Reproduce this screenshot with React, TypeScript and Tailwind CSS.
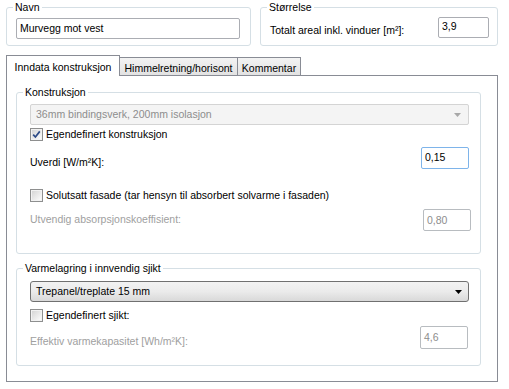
import type { ReactNode } from "react";

function GroupBox({ title, className, innerClassName, children }: { title: string; className: string; innerClassName: string; children: ReactNode }) {
  return (
    <fieldset className={`rounded-[3px] border border-[#d5dfe5] ${className}`}>
      <legend className="ml-[6px] px-[2px] leading-[13px]">{title}</legend>
      <div className={innerClassName}>{children}</div>
    </fieldset>
  );
}

function Check({ checked }: { checked?: boolean }) {
  return (
    <span className="flex h-[13px] w-[13px] shrink-0 items-center justify-center border border-[#8e8f8f] bg-white">
      <span className="flex h-[11px] w-[11px] items-center justify-center border border-[#f2f2f2] bg-gradient-to-br from-[#d6d6d6] to-[#fbfbfb]">
        {checked ? (
          <svg width="9" height="9" viewBox="0 0 9 9">
            <path d="M1.2 4.6 L3.4 7 L7.8 1.4" fill="none" stroke="#2d4b87" strokeWidth="1.7" />
          </svg>
        ) : null}
      </span>
    </span>
  );
}

function TextBox({ value, variant, className }: { value: string; variant: "normal" | "focus" | "disabled"; className: string }) {
  const styles = {
    normal: "border-[#abadb3] text-black",
    focus: "border-[#7eb4ea] text-black",
    disabled: "border-[#b8bcc0] text-[#8d8d8d]",
  }[variant];
  return <div className={`rounded-[2px] border bg-white pl-[3px] pt-[2px] leading-[13px] ${styles} ${className}`}>{value}</div>;
}

export default function App() {
  return (
    <div className="h-[389px] w-[509px] overflow-hidden bg-white pt-px font-['Liberation_Sans',Arial,sans-serif] text-[10.5px] text-black">
      <div className="ml-[6px] flex gap-[9px]">
        <GroupBox title="Navn" className="h-[45px] w-[245px]" innerClassName="pl-[9px] pt-[4px]">
          <TextBox value="Murvegg mot vest" variant="normal" className="h-[21px] w-[224px] pt-[3px]" />
        </GroupBox>
        <GroupBox title="Størrelse" className="h-[45px] w-[238px]" innerClassName="flex items-start justify-between pl-[9px] pr-[8px] pt-[3px]">
          <span className="mt-[7px] leading-[13px]">Totalt areal inkl. vinduer [m²]:</span>
          <TextBox value="3,9" variant="normal" className="h-[21px] w-[51px]" />
        </GroupBox>
      </div>

      <div className="ml-[6px] mt-[8px] flex h-[21px] items-end">
        <div className="relative z-10 -mb-px flex h-[21px] w-[114px] justify-center border border-b-0 border-[#898c95] bg-white pt-[5px] leading-[13px]">
          Inndata konstruksjon
        </div>
        <div className="flex h-[18px] w-[118px] justify-center border border-b-0 border-l-0 border-[#898c95] bg-gradient-to-b from-[#f3f3f3] to-[#e2e2e2] pt-[4px] leading-[13px]">
          Himmelretning/horisont
        </div>
        <div className="flex h-[18px] w-[63px] justify-center border border-b-0 border-l-0 border-[#898c95] bg-gradient-to-b from-[#f3f3f3] to-[#e2e2e2] pt-[4px] leading-[13px]">
          Kommentar
        </div>
      </div>

      <div className="ml-[6px] h-[307px] w-[492px] border border-[#898c95] bg-white pl-[9px] pt-[10px]">
        <GroupBox title="Konstruksjon" className="h-[168px] w-[465px]" innerClassName="pl-[13px] pr-[11px] pt-[5px]">
          <div className="flex h-[21px] items-center justify-between rounded-[2px] border border-[#d4d4d4] bg-[#f4f4f4] pl-[5px] pr-[7px] text-[#8d8d8d]">
            <span>36mm bindingsverk, 200mm isolasjon</span>
            <svg width="7" height="4" viewBox="0 0 7 4">
              <path d="M0 0 H7 L3.5 4 Z" fill="#a8a8a8" />
            </svg>
          </div>
          <div className="mt-[2px] flex h-[15px] items-center gap-[3px]">
            <Check checked />
            <span className="leading-[13px]">Egendefinert konstruksjon</span>
          </div>
          <div className="mt-[5px] flex items-start justify-between">
            <span className="mt-[9px] leading-[13px]">Uverdi [W/m²K]:</span>
            <TextBox value="0,15" variant="focus" className="h-[22px] w-[48px] pt-[3px]" />
          </div>
          <div className="mt-[19px] flex h-[15px] items-center gap-[3px]">
            <Check />
            <span className="leading-[13px]">Solutsatt fasade (tar hensyn til absorbert solvarme i fasaden)</span>
          </div>
          <div className="mt-[6px] flex items-start justify-between">
            <span className="mt-[4px] leading-[13px] text-[#a0a0a0]">Utvendig absorpsjonskoeffisient:</span>
            <TextBox value="0,80" variant="disabled" className="-mr-[2px] h-[22px] w-[48px] pt-[4px]" />
          </div>
        </GroupBox>

        <GroupBox title="Varmelagring i innvendig sjikt" className="mt-[8px] h-[104px] w-[465px]" innerClassName="pl-[13px] pr-[11px] pt-[6px]">
          <div className="flex h-[21px] items-center justify-between rounded-[3px] border border-[#707070] bg-gradient-to-b from-[#f2f2f2] via-[#ebebeb] to-[#d9d9d9] pl-[5px] pr-[6px]">
            <span>Trepanel/treplate 15 mm</span>
            <svg width="7" height="4" viewBox="0 0 7 4">
              <path d="M0 0 H7 L3.5 4 Z" fill="#000" />
            </svg>
          </div>
          <div className="mt-[6px] flex h-[15px] items-center gap-[3px]">
            <Check />
            <span className="leading-[13px]">Egendefinert sjikt:</span>
          </div>
          <div className="mt-[3px] flex items-start justify-between">
            <span className="mt-[9px] leading-[13px] text-[#a0a0a0]">Effektiv varmekapasitet [Wh/m²K]:</span>
            <TextBox value="4,6" variant="disabled" className="mr-px h-[23px] w-[48px] pt-[4px]" />
          </div>
        </GroupBox>
      </div>
    </div>
  );
}
